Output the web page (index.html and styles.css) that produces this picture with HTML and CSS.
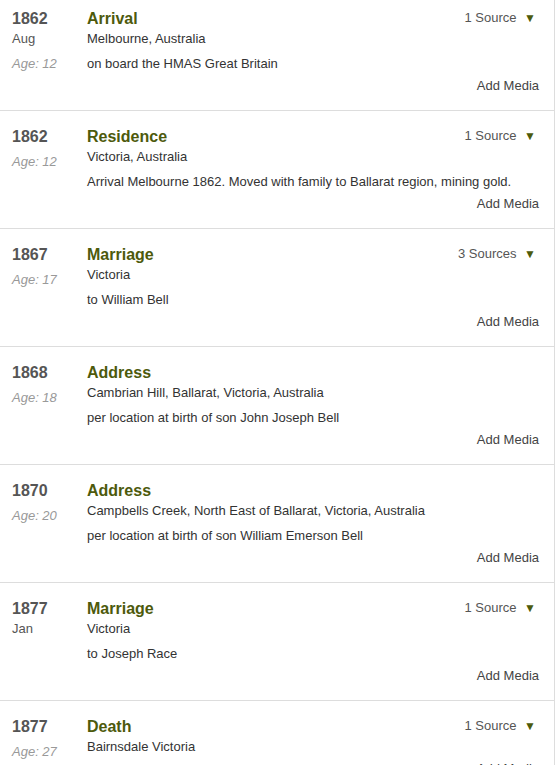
FILE: index.html
```html
<!DOCTYPE html>
<html lang="en">
<head>
    <meta charset="UTF-8">
    <meta name="viewport" content="width=device-width, initial-scale=1.0">
    <title>Life Events</title>
    <link rel="stylesheet" href="styles.css">
</head>
<body>
    <ul class="timeline">
        <li class="event">
            <div class="when">
                <div class="year">1862</div>
                <div class="month">Aug</div>
                <div class="age">Age: 12</div>
            </div>
            <div class="what">
                <h3 class="title">Arrival</h3>
                <div class="place">Melbourne, Australia</div>
                <div class="desc">on board the HMAS Great Britain</div>
                <div class="media">Add Media</div>
            </div>
            <div class="sources">1 Source <span class="arrow">&#9660;</span></div>
        </li>
        <li class="event">
            <div class="when">
                <div class="year">1862</div>
                <div class="age">Age: 12</div>
            </div>
            <div class="what">
                <h3 class="title">Residence</h3>
                <div class="place">Victoria, Australia</div>
                <div class="desc">Arrival Melbourne 1862. Moved with family to Ballarat region, mining gold.</div>
                <div class="media">Add Media</div>
            </div>
            <div class="sources">1 Source <span class="arrow">&#9660;</span></div>
        </li>
        <li class="event">
            <div class="when">
                <div class="year">1867</div>
                <div class="age">Age: 17</div>
            </div>
            <div class="what">
                <h3 class="title">Marriage</h3>
                <div class="place">Victoria</div>
                <div class="desc">to William Bell</div>
                <div class="media">Add Media</div>
            </div>
            <div class="sources">3 Sources <span class="arrow">&#9660;</span></div>
        </li>
        <li class="event">
            <div class="when">
                <div class="year">1868</div>
                <div class="age">Age: 18</div>
            </div>
            <div class="what">
                <h3 class="title">Address</h3>
                <div class="place">Cambrian Hill, Ballarat, Victoria, Australia</div>
                <div class="desc">per location at birth of son John Joseph Bell</div>
                <div class="media">Add Media</div>
            </div>
        </li>
        <li class="event">
            <div class="when">
                <div class="year">1870</div>
                <div class="age">Age: 20</div>
            </div>
            <div class="what">
                <h3 class="title">Address</h3>
                <div class="place">Campbells Creek, North East of Ballarat, Victoria, Australia</div>
                <div class="desc">per location at birth of son William Emerson Bell</div>
                <div class="media">Add Media</div>
            </div>
        </li>
        <li class="event">
            <div class="when">
                <div class="year">1877</div>
                <div class="month">Jan</div>
            </div>
            <div class="what">
                <h3 class="title">Marriage</h3>
                <div class="place">Victoria</div>
                <div class="desc">to Joseph Race</div>
                <div class="media">Add Media</div>
            </div>
            <div class="sources">1 Source <span class="arrow">&#9660;</span></div>
        </li>
        <li class="event">
            <div class="when">
                <div class="year">1877</div>
                <div class="age">Age: 27</div>
            </div>
            <div class="what">
                <h3 class="title">Death</h3>
                <div class="place">Bairnsdale Victoria</div>
                <div class="media">Add Media</div>
            </div>
            <div class="sources">1 Source <span class="arrow">&#9660;</span></div>
        </li>
    </ul>
</body>
</html>
```

FILE: styles.css
```css
body {
    font-family: "Liberation Sans", Arial, sans-serif;
    background-color: #fff;
    margin: 0;
    color: #333;
}

.timeline {
    list-style: none;
    width: 554px;
    margin: -7px 0 0 0;
    padding: 0;
    border-right: 1px solid #ddd;
}

.event {
    position: relative;
    display: flex;
    padding: 16px 15px 14px 12px;
    border-bottom: 1px solid #ddd;
}

.when {
    width: 75px;
    flex-shrink: 0;
}

.year {
    font-size: 16px;
    font-weight: bold;
    line-height: 20px;
    color: #555;
}

.month {
    font-size: 13px;
    line-height: 20px;
    color: #555;
}

.age {
    margin-top: 5px;
    font-size: 13px;
    line-height: 20px;
    font-style: italic;
    color: #999;
}

.what {
    flex: 1;
}

.title {
    margin: 0;
    font-size: 16px;
    line-height: 20px;
    font-weight: bold;
    color: #4d5a0c;
}

.place {
    font-size: 13px;
    line-height: 20px;
    color: #333;
}

.desc {
    margin-top: 5px;
    font-size: 13px;
    line-height: 20px;
    color: #333;
}

.media {
    margin-top: 2px;
    font-size: 13px;
    line-height: 20px;
    text-align: right;
    color: #444;
}

.sources {
    position: absolute;
    top: 15px;
    right: 18px;
    font-size: 13px;
    line-height: 20px;
    color: #555;
}

.arrow {
    margin-left: 4px;
    font-size: 12px;
    color: #4d5a0c;
}
```
